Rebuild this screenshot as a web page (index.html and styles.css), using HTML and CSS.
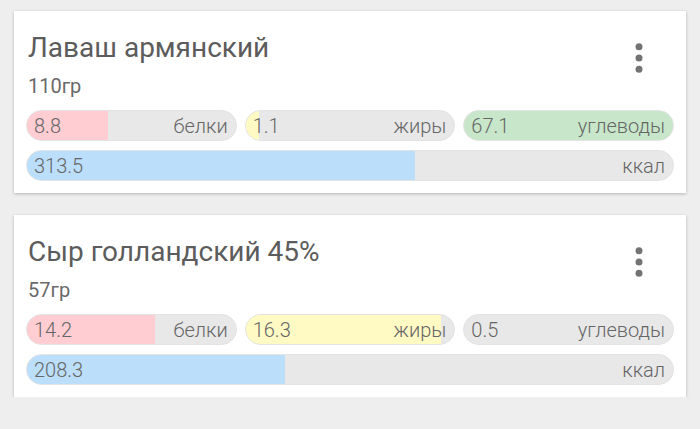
FILE: index.html
```html
<!DOCTYPE html>
<html lang="ru">
<head>
<meta charset="utf-8">
<title>Продукты</title>
<link rel="stylesheet" href="styles.css">
</head>
<body>
<main class="list">
  <section class="card">
    <div class="head">
      <div class="info">
        <div class="title">Лаваш армянский</div>
        <div class="weight">110гр</div>
      </div>
      <svg class="more" width="24" height="36" viewBox="0 0 24 36"><circle cx="12" cy="5.7" r="3.5"/><circle cx="12" cy="17" r="3.5"/><circle cx="12" cy="28.3" r="3.5"/></svg>
    </div>
    <div class="rows">
      <div class="row3">
        <div class="pill"><div class="fill protein" style="width:38.6%"></div><span class="val">8.8</span><span class="lbl">белки</span></div>
        <div class="pill"><div class="fill fat" style="width:6.2%"></div><span class="val">1.1</span><span class="lbl">жиры</span></div>
        <div class="pill"><div class="fill carb" style="width:100%"></div><span class="val">67.1</span><span class="lbl">углеводы</span></div>
      </div>
      <div class="pill"><div class="fill kcal" style="width:60.1%"></div><span class="val">313.5</span><span class="lbl">ккал</span></div>
    </div>
  </section>
  <section class="card">
    <div class="head">
      <div class="info">
        <div class="title">Сыр голландский 45%</div>
        <div class="weight">57гр</div>
      </div>
      <svg class="more" width="24" height="36" viewBox="0 0 24 36"><circle cx="12" cy="5.7" r="3.5"/><circle cx="12" cy="17" r="3.5"/><circle cx="12" cy="28.3" r="3.5"/></svg>
    </div>
    <div class="rows">
      <div class="row3">
        <div class="pill"><div class="fill protein" style="width:61.5%"></div><span class="val">14.2</span><span class="lbl">белки</span></div>
        <div class="pill"><div class="fill fat" style="width:93.8%"></div><span class="val">16.3</span><span class="lbl">жиры</span></div>
        <div class="pill"><div class="fill carb" style="width:0%"></div><span class="val">0.5</span><span class="lbl">углеводы</span></div>
      </div>
      <div class="pill"><div class="fill kcal" style="width:40%"></div><span class="val">208.3</span><span class="lbl">ккал</span></div>
    </div>
  </section>
</main>
</body>
</html>
```
FILE: styles.css
```css
html, body {
  margin: 0;
  padding: 0;
  background: #eeeeee;
  font-family: Roboto, "Noto Sans", "DejaVu Sans", sans-serif;
}
.list {
  padding: 11px 14px 0;
  display: flex;
  flex-direction: column;
  gap: 22px;
}
.card {
  background: #ffffff;
  padding: 0 12px 12px;
  box-shadow: 0 1px 3px rgba(0, 0, 0, 0.24);
}
.head {
  display: flex;
  justify-content: space-between;
  align-items: flex-start;
}
.info {
  padding: 21px 0 0 2px;
}
.title {
  font-size: 28px;
  line-height: 32px;
  color: #5c5c5c;
}
.weight {
  margin-top: 10px;
  font-size: 20px;
  line-height: 24px;
  color: #6a6a6a;
}
.more {
  margin: 30px 23px 0 0;
  fill: #737373;
}
.rows {
  margin-top: 12px;
  display: flex;
  flex-direction: column;
  gap: 9px;
}
.row3 {
  display: grid;
  grid-template-columns: repeat(3, 1fr);
  gap: 8px;
}
.pill {
  position: relative;
  height: 31px;
  box-sizing: border-box;
  border: 1.5px solid #e3e3e3;
  border-radius: 16px;
  background: #e8e8e8;
  overflow: hidden;
  display: flex;
  align-items: center;
  justify-content: space-between;
  padding: 0 8px 0 7px;
  font-size: 20px;
  font-weight: 300;
  color: #666666;
}
.fill {
  position: absolute;
  left: 0;
  top: 0;
  bottom: 0;
}
.protein { background: #ffcdd2; }
.fat { background: #fff9c4; }
.carb { background: #c8e6c9; }
.kcal { background: #bbdefb; }
.val, .lbl {
  position: relative;
}
```
